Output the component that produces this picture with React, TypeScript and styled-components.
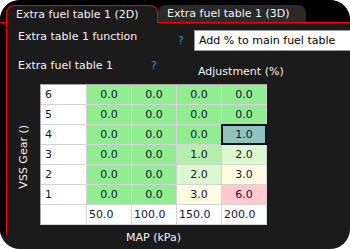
import React from "react";
import styled, { createGlobalStyle } from "styled-components";

const Global = createGlobalStyle`
  html, body { margin: 0; padding: 0; background: #ffffff; }
  body { font-family: "DejaVu Sans", "Liberation Sans", sans-serif; font-size: 11px; }
`;

const Window = styled.div`
  width: 350px;
  height: 249px;
  border-radius: 20px;
  overflow: hidden;
  background: #1b1b1b;
  display: flex;
  flex-direction: column;
  color: #f2f2f2;
`;

const TabStrip = styled.div`
  height: 22px;
  flex: none;
  background: #000;
  border-bottom: 1px solid #ff0000;
  display: flex;
  align-items: flex-end;
  padding-left: 6px;
`;

const Tab = styled.div<{ $active?: boolean }>`
  box-sizing: border-box;
  width: ${(p) => (p.$active ? "152px" : "148px")};
  height: ${(p) => (p.$active ? "18px" : "17px")};
  margin-bottom: ${(p) => (p.$active ? "-1px" : "0")};
  padding-left: 9px;
  display: flex;
  align-items: center;
  border-radius: 8px 8px 0 0;
  background: ${(p) => (p.$active ? "#1b1b1b" : "#2a2a2a")};
  border: ${(p) => (p.$active ? "1px solid #ff0000" : "none")};
  border-bottom: none;
  color: #f2f2f2;
  white-space: nowrap;
  position: relative;
  z-index: ${(p) => (p.$active ? 1 : 0)};
`;

const Main = styled.div`
  flex: 1;
  display: flex;
  min-height: 0;
`;

const Rail = styled.div`
  width: 6px;
  height: 212px;
  flex: none;
  align-self: flex-start;
  background: #000;
  border-right: 1px solid #ff0000;
`;

const Panel = styled.div`
  flex: 1;
  display: flex;
  flex-direction: column;
  min-width: 0;
`;

const FunctionRow = styled.div`
  margin-top: 7px;
  height: 21px;
  padding-left: 11px;
  display: grid;
  grid-template-columns: 160px 16px 170px;
  align-items: center;
`;

const TableRow = styled.div`
  margin-top: 8px;
  height: 20px;
  padding-left: 11px;
  display: grid;
  grid-template-columns: 133px 47px auto;
`;

const Label = styled.span<{ $end?: boolean }>`
  line-height: 14px;
  white-space: nowrap;
  align-self: ${(p) => (p.$end ? "end" : "start")};
`;

const Help = styled.span<{ $start?: boolean }>`
  color: #1e9ad0;
  line-height: 14px;
  align-self: ${(p) => (p.$start ? "start" : "center")};
`;

const Select = styled.div`
  box-sizing: border-box;
  height: 21px;
  background: #fff;
  border: 1px solid #9a9a9a;
  color: #000;
  padding-left: 4px;
  display: flex;
  align-items: center;
  white-space: nowrap;
`;

const TableArea = styled.div`
  margin-top: 5px;
  display: flex;
`;

const YAxis = styled.div`
  box-sizing: border-box;
  width: 33px;
  flex: none;
  display: flex;
  align-items: flex-end;
  justify-content: center;
  padding-bottom: 36px;
`;

const YAxisText = styled.span`
  writing-mode: vertical-rl;
  transform: rotate(180deg);
  white-space: nowrap;
  line-height: 14px;
`;

const Grid = styled.div`
  display: grid;
  grid-template-columns: 45px 44px 44px 44px 44px;
  grid-auto-rows: 19px;
  gap: 1px;
  background: #d4d4d4;
  border: 1px solid #a8a8a8;
  border-right-color: #d4d4d4;
  border-bottom-color: #d4d4d4;
`;

const Cell = styled.div<{ $bg: string; $align?: "left" | "center"; $selected?: boolean }>`
  background: ${(p) => p.$bg};
  color: #14143a;
  display: flex;
  align-items: center;
  justify-content: ${(p) => (p.$align === "left" ? "flex-start" : "center")};
  padding-left: ${(p) => (p.$align === "left" ? "4px" : "0")};
  box-shadow: ${(p) => (p.$selected ? "0 0 0 1px #0c0c2a, inset 0 0 0 1px #0c0c2a" : "none")};
  position: relative;
  z-index: ${(p) => (p.$selected ? 1 : 0)};
`;

const AxisCell = styled(Cell)`
  padding-left: 2px;
`;

const XAxis = styled.div`
  margin-top: 6px;
  margin-left: 33px;
  width: 227px;
  text-align: center;
  line-height: 14px;
`;

const GREEN = "#90ee90";
const colors: Record<string, string> = {
  "0.0": GREEN,
  "1.0": "#b4f0aa",
  "2.0": "#dcf8cf",
  "3.0": "#fffde0",
  "6.0": "#ffc9cf",
};

const rows: { gear: string; values: string[] }[] = [
  { gear: "6", values: ["0.0", "0.0", "0.0", "0.0"] },
  { gear: "5", values: ["0.0", "0.0", "0.0", "0.0"] },
  { gear: "4", values: ["0.0", "0.0", "0.0", "1.0"] },
  { gear: "3", values: ["0.0", "0.0", "1.0", "2.0"] },
  { gear: "2", values: ["0.0", "0.0", "2.0", "3.0"] },
  { gear: "1", values: ["0.0", "0.0", "3.0", "6.0"] },
];

const mapAxis = ["50.0", "100.0", "150.0", "200.0"];

export default function App() {
  return (
    <>
      <Global />
      <Window>
        <TabStrip>
          <Tab $active>Extra fuel table 1 (2D)</Tab>
          <Tab>Extra fuel table 1 (3D)</Tab>
        </TabStrip>
        <Main>
          <Rail />
          <Panel>
            <FunctionRow>
              <Label>Extra table 1 function</Label>
              <Help>?</Help>
              <Select>Add % to main fuel table</Select>
            </FunctionRow>
            <TableRow>
              <Label>Extra fuel table 1</Label>
              <Help $start>?</Help>
              <Label $end>Adjustment (%)</Label>
            </TableRow>
            <TableArea>
              <YAxis>
                <YAxisText>VSS Gear ()</YAxisText>
              </YAxis>
              <Grid>
                {rows.map((r, ri) => (
                  <React.Fragment key={r.gear}>
                    <Cell $bg="#fff" $align="left">{r.gear}</Cell>
                    {r.values.map((v, ci) => (
                      <Cell
                        key={ci}
                        $bg={ri === 2 && ci === 3 ? "#8fc3bb" : colors[v]}
                        $selected={ri === 2 && ci === 3}
                      >
                        {v}
                      </Cell>
                    ))}
                  </React.Fragment>
                ))}
                <Cell $bg="#fff" $align="left" />
                {mapAxis.map((m) => (
                  <AxisCell key={m} $bg="#fff" $align="left">{m}</AxisCell>
                ))}
              </Grid>
            </TableArea>
            <XAxis>MAP (kPa)</XAxis>
          </Panel>
        </Main>
      </Window>
    </>
  );
}
